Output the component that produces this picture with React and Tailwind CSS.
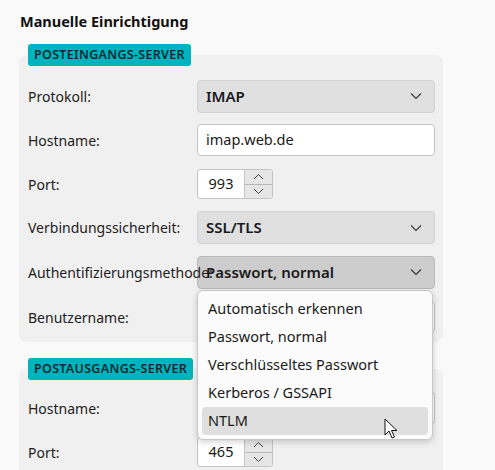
import React from 'react';

const font = { fontFamily: '"Noto Sans", "Open Sans", sans-serif' };

const Chevron = () => (
  <svg width="12" height="8" viewBox="0 0 12 8" className="absolute right-[12px] top-1/2 -translate-y-1/2">
    <path d="M1 1.5 L6 6.5 L11 1.5" fill="none" stroke="#333" strokeWidth="1.1" />
  </svg>
);

const Select = ({ value, active }) => (
  <div
    className={
      active
        ? 'relative w-[238px] h-[33px] rounded-[4px] border border-[#b9b9b9] bg-[#cdcdcd] pl-[8px] flex items-center text-[15px] font-semibold text-[#1a1a1a]'
        : 'relative w-[238px] h-[33px] rounded-[4px] border border-[#d2d2d2] bg-[#e0e0e0] pl-[8px] flex items-center text-[15px] font-semibold text-[#1a1a1a]'
    }
  >
    {value}
    <Chevron />
  </div>
);

const TextInput = ({ value }) => (
  <div className="w-[238px] h-[32px] rounded-[4px] border border-[#c4c4c4] bg-white pl-[8px] flex items-center text-[14.5px] text-[#1a1a1a]">
    {value}
  </div>
);

const Spinner = ({ value }) => (
  <div className="flex h-[30px] w-[76px] rounded-[3px] border border-[#c4c4c4] bg-white overflow-hidden">
    <div className="w-[46px] flex items-center justify-center text-[14.5px] text-[#1a1a1a]">{value}</div>
    <div className="flex-1 flex flex-col border-l border-[#c4c4c4] bg-[#e6e6e6]">
      <div className="flex-1 flex items-center justify-center border-b border-[#b8b8b8]">
        <svg width="11" height="7" viewBox="0 0 11 7">
          <path d="M1 6 L5.5 1.5 L10 6" fill="none" stroke="#444" strokeWidth="1" />
        </svg>
      </div>
      <div className="flex-1 flex items-center justify-center">
        <svg width="11" height="7" viewBox="0 0 11 7">
          <path d="M1 1 L5.5 5.5 L10 1" fill="none" stroke="#444" strokeWidth="1" />
        </svg>
      </div>
    </div>
  </div>
);

const Row = ({ label, children, h = 'h-[44px]', top }) => (
  <div className={top ? `relative z-40 flex items-center ${h}` : `flex items-center ${h}`}>
    <div
      className={
        top
          ? 'relative z-20 w-[169px] shrink-0 whitespace-nowrap text-[14px] text-[#222]'
          : 'w-[169px] shrink-0 whitespace-nowrap text-[14px] text-[#222]'
      }
    >
      {label}
    </div>
    <div className="relative z-10">{children}</div>
  </div>
);

const Badge = ({ children }) => (
  <div className="relative z-10 ml-[8px] flex w-fit h-[22px] items-center rounded-[3px] bg-[#00b4bf] px-[6px] text-[12.5px] font-semibold text-[#0b2b30] tracking-[0.3px]">
    {children}
  </div>
);

const Cursor = () => (
  <svg width="16" height="22" viewBox="0 0 16 22" className="absolute left-[186px] top-[127px]">
    <path d="M1 1 L1 17 L5 13 L8 20 L10.5 19 L7.5 12.5 L13 12.5 Z" fill="#fff" stroke="#111" strokeWidth="1" strokeLinejoin="round" />
  </svg>
);

export default function App() {
  const options = ['Automatisch erkennen', 'Passwort, normal', 'Verschlüsseltes Passwort', 'Kerberos / GSSAPI', 'NTLM'];

  return (
    <div className="w-[495px] h-[470px] overflow-hidden bg-[#f9f9f9] pl-[20px] pt-[10px]" style={font}>
      <div className="text-[14.5px] font-bold text-[#111] leading-[22px]">Manuelle Einrichtigung</div>

      <div className="mt-[12px] relative">
        <Badge>POSTEINGANGS-SERVER</Badge>
        <div className="-mt-[11px] ml-[-1px] w-[424px] h-[287px] rounded-[8px] bg-[#f0f0f0] pl-[9px] pt-[19px]">
          <Row label="Protokoll:"><Select value="IMAP" /></Row>
          <Row label="Hostname:"><TextInput value="imap.web.de" /></Row>
          <Row label="Port:"><Spinner value="993" /></Row>
          <Row label="Verbindungssicherheit:" h="h-[43px]"><Select value="SSL/TLS" /></Row>
          <Row label="Authentifizierungsmethode:" h="h-[46px]" top>
            <Select value="Passwort, normal" active />
            <div className="absolute left-0 top-[34px] z-20 w-[236px] rounded-[6px] border border-[#c8c8c8] bg-[#fbfbfb] p-[4px] shadow-[0_2px_6px_rgba(0,0,0,0.18)]">
              {options.map((o, i) => (
                <div
                  key={o}
                  className={
                    i === options.length - 1
                      ? 'h-[28px] rounded-[4px] bg-[#dfdfdf] pl-[6px] flex items-center text-[14.5px] text-[#1a1a1a]'
                      : 'h-[28px] pl-[6px] flex items-center text-[14.5px] text-[#1a1a1a]'
                  }
                >
                  {o}
                </div>
              ))}
              <Cursor />
            </div>
          </Row>
          <Row label="Benutzername:"><TextInput value="" /></Row>
        </div>
      </div>

      <div className="mt-[16px] relative">
        <Badge>POSTAUSGANGS-SERVER</Badge>
        <div className="-mt-[11px] ml-[-1px] w-[424px] h-[120px] rounded-[8px] bg-[#f0f0f0] pl-[9px] pt-[17px]">
          <Row label="Hostname:"><TextInput value="" /></Row>
          <Row label="Port:"><Spinner value="465" /></Row>
        </div>
      </div>
    </div>
  );
}
